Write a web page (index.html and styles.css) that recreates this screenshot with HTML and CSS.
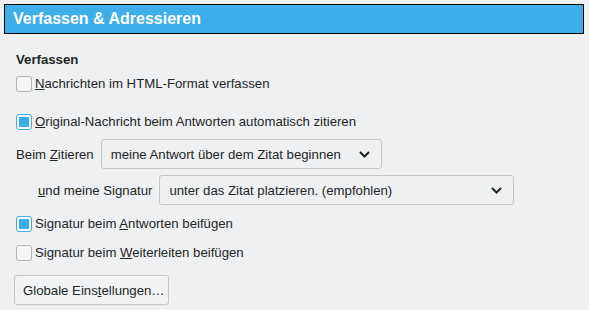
FILE: index.html
```html
<!DOCTYPE html>
<html lang="de">
<head>
<meta charset="utf-8">
<title>Verfassen &amp; Adressieren</title>
<link rel="stylesheet" href="styles.css">
</head>
<body>
<div class="page">
  <div class="header">Verfassen &amp; Adressieren</div>
  <div class="content">
    <div class="section-title">Verfassen</div>
    <label class="check row-1"><span class="box"></span><span><u>N</u>achrichten im HTML-Format verfassen</span></label>
    <label class="check row-2"><span class="box checked"></span><span><u>O</u>riginal-Nachricht beim Antworten automatisch zitieren</span></label>
    <div class="combo-row row-3">
      <span class="combo-label">Beim <u>Z</u>itieren</span>
      <div class="combo combo-a"><span>meine Antwort über dem Zitat beginnen</span>
        <svg class="chev" width="11" height="7" viewBox="0 0 11 7"><path d="M1 1 L5.5 5.5 L10 1" fill="none" stroke="#232627" stroke-width="2"/></svg>
      </div>
    </div>
    <div class="combo-row row-4 indent">
      <span class="combo-label"><u>u</u>nd meine Signatur</span>
      <div class="combo combo-b"><span>unter das Zitat platzieren. (empfohlen)</span>
        <svg class="chev" width="11" height="7" viewBox="0 0 11 7"><path d="M1 1 L5.5 5.5 L10 1" fill="none" stroke="#232627" stroke-width="2"/></svg>
      </div>
    </div>
    <label class="check row-5"><span class="box checked"></span><span>Signatur beim <u>A</u>ntworten beifügen</span></label>
    <label class="check row-6"><span class="box"></span><span>Signatur beim <u>W</u>eiterleiten beifügen</span></label>
    <div class="row-7"><button class="btn">Globale Eins<u>t</u>ellungen…</button></div>
  </div>
</div>
</body>
</html>
```
FILE: styles.css
```css
html, body {
  margin: 0;
  padding: 0;
  background: #eff0f1;
}
body {
  font-family: "Liberation Sans", Arial, sans-serif;
  font-size: 13.2px;
  color: #232627;
}
.page {
  width: 589px;
  height: 310px;
  overflow: hidden;
  padding-top: 4px;
  box-sizing: border-box;
}
.header {
  margin: 0 5px 0 4px;
  height: 30px;
  box-sizing: border-box;
  border: 1px solid #000;
  background: #3daee9;
  color: #fff;
  font-weight: bold;
  font-size: 16px;
  line-height: 28px;
  padding-left: 8px;
}
.content {
  display: flex;
  flex-direction: column;
  align-items: flex-start;
  padding-left: 16px;
}
.section-title {
  font-weight: bold;
  line-height: 16px;
  margin-top: 18px;
}
.check {
  display: flex;
  align-items: center;
  gap: 3px;
  line-height: 16px;
}
.box {
  width: 16px;
  height: 16px;
  box-sizing: border-box;
  border: 1px solid #b4b6b8;
  border-radius: 3px;
  background: #f4f5f5;
  position: relative;
}
.box.checked {
  border-color: #3daee9;
  background: #fcfcfc;
}
.box.checked::after {
  content: "";
  position: absolute;
  left: 2px;
  top: 2px;
  width: 10px;
  height: 10px;
  background: #3daee9;
}
.row-1 { margin-top: 8px; }
.row-2 { margin-top: 22px; }
.row-3 { margin-top: 9px; }
.row-4 { margin-top: 6px; }
.row-5 { margin-top: 11px; }
.row-6 { margin-top: 13px; }
.row-7 { margin-top: 14px; margin-left: -2px; }
.combo-row {
  display: flex;
  align-items: center;
  gap: 7px;
}
.indent { margin-left: 22px; }
.combo {
  height: 30px;
  box-sizing: border-box;
  border: 1px solid #c3c5c7;
  border-radius: 3px;
  background: #eff0f1;
  display: flex;
  align-items: center;
  justify-content: space-between;
  padding: 0 11px 0 9px;
}
.combo-a { width: 281px; }
.combo-b { width: 355px; }
.btn {
  height: 30px;
  box-sizing: border-box;
  border: 1px solid #c3c5c7;
  border-radius: 3px;
  background: #f1f2f3;
  font-family: inherit;
  font-size: 13.2px;
  color: #232627;
  padding: 0 8px;
  white-space: nowrap;
  width: 155px;
}
```
